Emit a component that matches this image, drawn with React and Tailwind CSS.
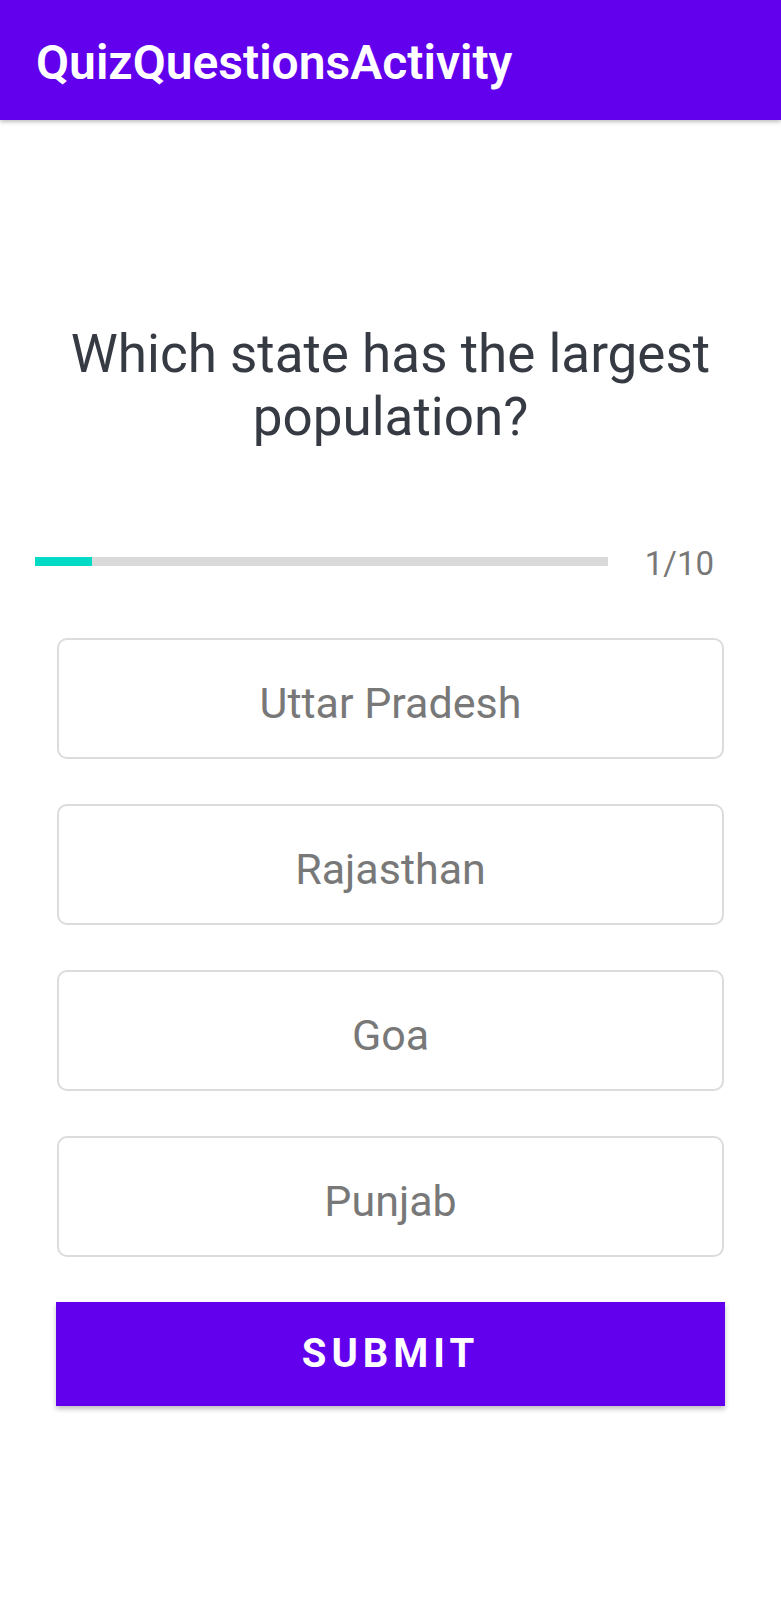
const options = ['Uttar Pradesh', 'Rajasthan', 'Goa', 'Punjab'];

function OptionBox({ label }) {
  return (
    <div className="h-[121px] rounded-[10px] border-2 border-[#dcdcdc] bg-white flex items-center justify-center pt-[8px]">
      <span className="text-[43px] leading-[52px] text-[#787878]">{label}</span>
    </div>
  );
}

export default function App() {
  const current = 1;
  const total = 10;

  return (
    <div className="min-h-[1600px] bg-white font-['Roboto',_'Liberation_Sans',_sans-serif]">
      <header className="relative z-10 h-[120px] bg-[#6200ee] pl-[36px] pt-[37px] shadow-[0_2px_4px_rgba(0,0,0,0.25)]">
        <h1 className="text-[48px] leading-[52px] font-semibold text-white">QuizQuestionsActivity</h1>
      </header>

      <main className="flex flex-col">
        <p className="mt-[203px] px-[40px] text-center text-[53px] leading-[63px] text-[#363a43]">
          Which state has the largest population?
        </p>

        <div className="mt-[96px] flex items-start pl-[35px] pr-[67px]">
          <div className="mt-[12px] h-[9px] flex-1 bg-[#dadada]">
            <div className="h-full bg-[#03dac5]" style={{ width: `${(current / total) * 100}%` }} />
          </div>
          <span className="ml-[37px] text-[33px] leading-[38px] text-[#787878]">
            {current}/{total}
          </span>
        </div>

        <div className="mt-[55px] flex flex-col gap-[45px] pl-[57px] pr-[57px]">
          {options.map((o) => (
            <OptionBox key={o} label={o} />
          ))}
        </div>

        <div className="mt-[45px] px-[56px]">
          <button className="h-[104px] w-full bg-[#6200ee] text-white text-[40px] font-bold tracking-[5px] shadow-[0_3px_5px_rgba(0,0,0,0.25)]">
            SUBMIT
          </button>
        </div>
      </main>
    </div>
  );
}
